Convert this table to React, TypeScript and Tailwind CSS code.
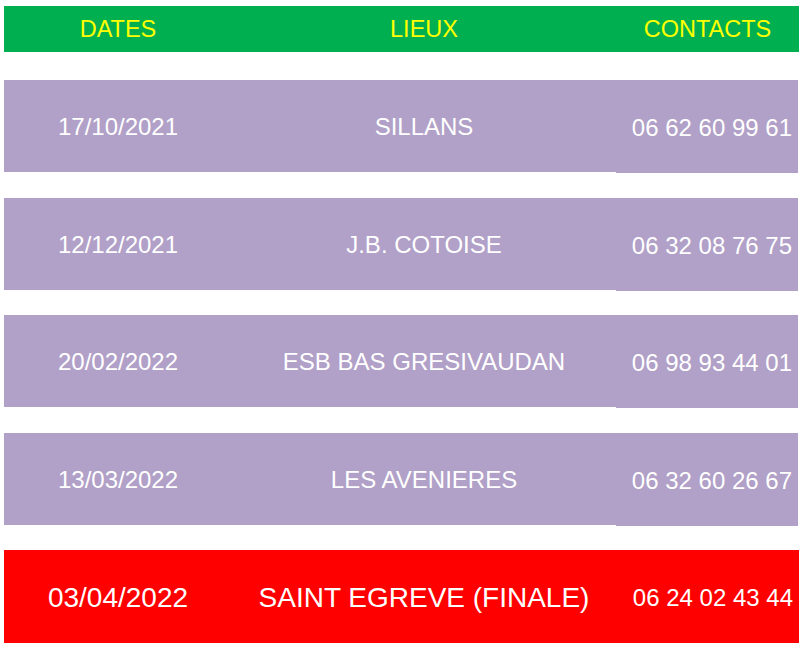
const rows = [
  { date: '17/10/2021', place: 'SILLANS', phone: '06 62 60 99 61', mt: 'mt-[28px]' },
  { date: '12/12/2021', place: 'J.B. COTOISE', phone: '06 32 08 76 75', mt: 'mt-[26px]' },
  { date: '20/02/2022', place: 'ESB BAS GRESIVAUDAN', phone: '06 98 93 44 01', mt: 'mt-[25px]' },
  { date: '13/03/2022', place: 'LES AVENIERES', phone: '06 32 60 26 67', mt: 'mt-[26px]' },
]

export default function App() {
  return (
    <div className="w-[805px] h-[647px] bg-white overflow-hidden pt-[6px] pl-[4px] font-['Liberation_Sans',Arial,sans-serif]">
      {/* header */}
      <div className="flex h-[46px] w-[795px] bg-[#00b050] pt-[2px] text-[23.5px] text-[#ffff00]">
        <div className="flex w-[228px] items-center justify-center">DATES</div>
        <div className="flex w-[384px] items-center justify-center">LIEUX</div>
        <div className="flex flex-1 items-center justify-center">CONTACTS</div>
      </div>

      {rows.map((r) => (
        <div key={r.date} className={`${r.mt} flex h-[92px] w-[794px] items-start text-[24px] text-white`}>
          <div className="flex h-[92px] w-[228px] items-center justify-center bg-[#b1a0c7] pt-[2px]">{r.date}</div>
          <div className="flex h-[92px] w-[384px] items-center justify-center bg-[#b1a0c7] pt-[2px]">{r.place}</div>
          <div className="flex h-[93px] w-[182px] items-center justify-end bg-[#b1a0c7] pt-[2px] pr-[6px]">{r.phone}</div>
        </div>
      ))}

      {/* finale */}
      <div className="mt-[25px] flex h-[93px] w-[795px] bg-[#ff0000] pt-[2px] text-white">
        <div className="flex w-[228px] items-center justify-center text-[28px]">03/04/2022</div>
        <div className="flex w-[384px] items-center justify-center text-[28px]">SAINT EGREVE (FINALE)</div>
        <div className="flex flex-1 items-center justify-end pr-[6px] text-[24px]">06 24 02 43 44</div>
      </div>
    </div>
  )
}
